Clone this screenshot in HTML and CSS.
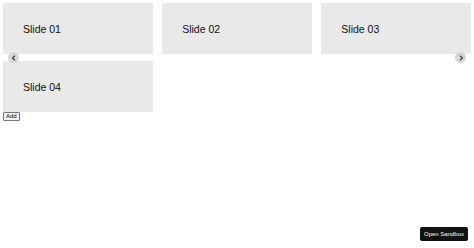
FILE: index.html
```html
<!DOCTYPE html>
<html>
<head>
<meta charset="utf-8">
<link rel="stylesheet" href="styles.css">
</head>
<body>
<div class="carousel">
  <div class="grid">
    <div class="slide"><span>Slide 01</span></div>
    <div class="slide"><span>Slide 02</span></div>
    <div class="slide"><span>Slide 03</span></div>
    <div class="slide"><span>Slide 04</span></div>
  </div>
  <button class="nav prev" aria-label="Previous">
    <svg viewBox="0 0 10 10" width="10" height="10"><path d="M6 2.6 L3.6 5 L6 7.4" fill="none" stroke="#333" stroke-width="1.1"/></svg>
  </button>
  <button class="nav next" aria-label="Next">
    <svg viewBox="0 0 10 10" width="10" height="10"><path d="M4 2.6 L6.4 5 L4 7.4" fill="none" stroke="#333" stroke-width="1.1"/></svg>
  </button>
</div>
<button class="add">Add</button>
<button class="sandbox">Open Sandbox</button>
</body>
</html>
```
FILE: styles.css
```css
html, body {
  margin: 0;
  padding: 0;
  background: #fff;
  font-family: "Liberation Sans", Arial, sans-serif;
}
body {
  padding: 3px;
  height: 248px;
  box-sizing: border-box;
  position: relative;
}
.carousel {
  position: relative;
}
.grid {
  display: grid;
  grid-template-columns: repeat(3, 1fr);
  column-gap: 9.5px;
  row-gap: 7px;
}
.slide {
  background: #e9e9e9;
  height: 51px;
  display: flex;
  align-items: center;
  padding-left: 20px;
  padding-top: 1px;
  box-sizing: border-box;
  font-size: 10.5px;
  color: #111;
}
.nav {
  position: absolute;
  top: 49px;
  width: 11px;
  height: 11px;
  border-radius: 50%;
  border: none;
  background: #d6d6d6;
  padding: 0;
  display: flex;
  align-items: center;
  justify-content: center;
}
.prev { left: 5px; }
.next { right: 5px; }
.add {
  display: block;
  margin: 0;
  padding: 0 2px;
  height: 9px;
  font-family: "Liberation Sans", Arial, sans-serif;
  font-size: 6px;
  line-height: 7px;
  background: #f0f0f0;
  border: 1px solid #767676;
  border-radius: 1px;
  color: #000;
}
.sandbox {
  position: absolute;
  right: 6px;
  bottom: 7px;
  background: #111;
  color: #fff;
  border: none;
  border-radius: 2px;
  font-family: "Liberation Sans", Arial, sans-serif;
  font-size: 6px;
  height: 14px;
  padding: 0 4px;
}
```
